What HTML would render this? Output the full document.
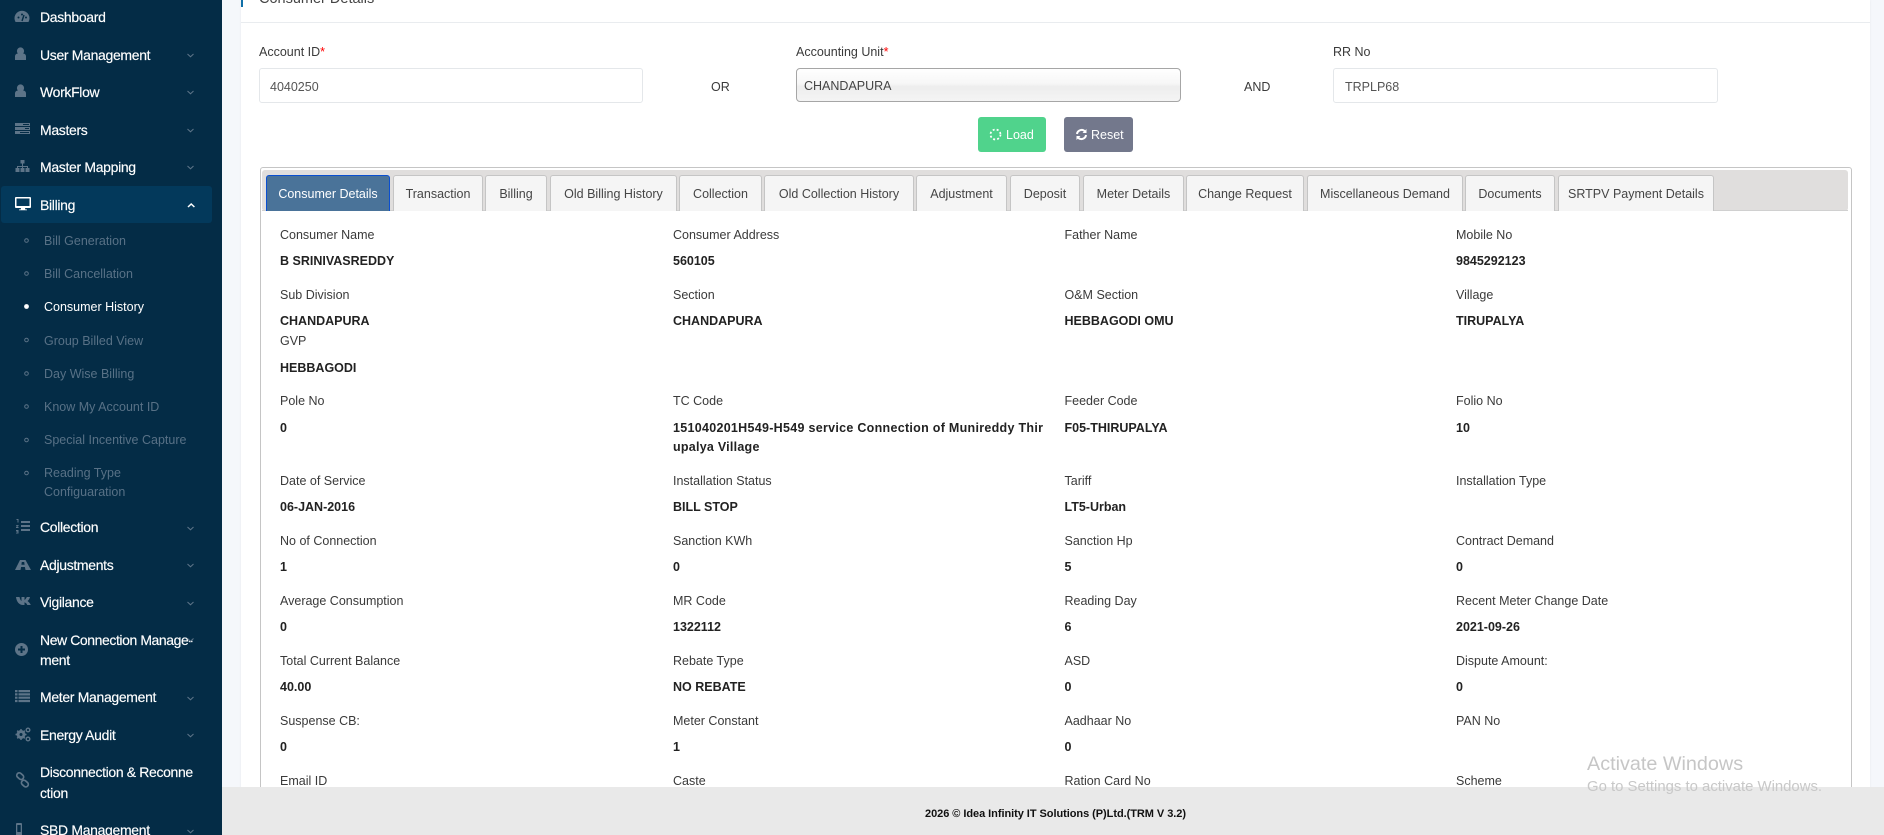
<!DOCTYPE html>
<html><head><meta charset="utf-8"><title>Consumer Details</title>
<style>
html,body{margin:0;padding:0;width:1884px;height:835px;overflow:hidden;background:#f5f7fb;font-family:"Liberation Sans",Arial,sans-serif;color:#333}
.a,.t,.s,.m,.l,.v,.tab{position:absolute;box-sizing:border-box}
.t,.s,.m,.l,.v{white-space:nowrap;line-height:16px}
#side{position:absolute;left:0;top:0;width:222px;height:835px;background:#042c46;overflow:hidden}
.m{left:40px;color:#fff;font-size:14px;letter-spacing:-.33px;-webkit-text-stroke:.15px #fff}
.s{left:44px;color:#587186;font-size:12.5px;margin-top:1px}
.l{font-size:12.5px;color:#3a3a3a}
.v{font-size:12.5px;font-weight:bold;color:#222}
.tab{top:175px;height:36px;background:#f5f5f5;border:1px solid #c5c5c5;border-bottom:0;border-radius:3px 3px 0 0;text-align:center;line-height:36px;font-size:12.5px;color:#454545;white-space:nowrap}
.inp{position:absolute;top:68px;height:35px;background:#fff;border:1px solid #e4e7ea;border-radius:3px;box-sizing:border-box}
</style></head><body>

<div id="side">
<div class="a" style="left:1px;top:186px;width:211px;height:37px;background:#03395b;border-radius:3px"></div>
<div class="m" style="top:9px">Dashboard</div>
<div class="m" style="top:47px">User Management</div>
<div class="m" style="top:84px">WorkFlow</div>
<div class="m" style="top:122px">Masters</div>
<div class="m" style="top:159px">Master Mapping</div>
<div class="m" style="top:197px">Billing</div>
<div class="s" style="top:232px">Bill Generation</div>
<div class="s" style="top:265px">Bill Cancellation</div>
<div class="s" style="top:298px;color:#fff">Consumer History</div>
<div class="s" style="top:332px">Group Billed View</div>
<div class="s" style="top:365px">Day Wise Billing</div>
<div class="s" style="top:398px">Know My Account ID</div>
<div class="s" style="top:431px">Special Incentive Capture</div>
<div class="s" style="top:464px">Reading Type</div>
<div class="s" style="top:483px">Configuaration</div>
<div class="m" style="top:519px">Collection</div>
<div class="m" style="top:557px">Adjustments</div>
<div class="m" style="top:594px">Vigilance</div>
<div class="m" style="top:632px;letter-spacing:-.42px">New Connection Manage-</div>
<div class="m" style="top:652px">ment</div>
<div class="m" style="top:689px">Meter Management</div>
<div class="m" style="top:727px">Energy Audit</div>
<div class="m" style="top:764px;letter-spacing:-.36px">Disconnection &amp; Reconne</div>
<div class="m" style="top:785px">ction</div>
<div class="m" style="top:822px">SBD Management</div>
<svg class="a" style="left:0;top:0" width="222" height="835" viewBox="0 0 222 835">
<g fill="#5d7488">
<!-- gauge -->
<path d="M15.5 22a7.5 7.5 0 1 1 13 0z"/><path d="M22 21l2-6" stroke="#042c46" stroke-width="1.4"/><circle cx="18.5" cy="17.5" r="1" fill="#042c46"/><circle cx="22" cy="14.5" r="1" fill="#042c46"/><circle cx="26" cy="17.5" r="1" fill="#042c46"/>
<!-- user -->
<circle cx="20.5" cy="51" r="3.6"/><path d="M15 60v-3.5c0-2 1.5-3 3-3h5c1.5 0 3 1 3 3V60z"/>
<circle cx="20.5" cy="88" r="3.6"/><path d="M15 97v-3.5c0-2 1.5-3 3-3h5c1.5 0 3 1 3 3V97z"/>
<!-- masters -->
<path d="M15 123h15v3h-15zM15 127h15v3h-15zM15 131h15v3h-15z"/><path d="M23 124h6v1h-6zM25 128h4v1h-4zM20 132h9v1h-9z" fill="#042c46"/>
<!-- sitemap -->
<path d="M20.5 160h4v3.5h-4zM22 163.5h1V166h5v2h-1v-1h-4v1h-1v-1h-4v1h-1v-2h5z"/><path d="M15.5 168h4v4h-4zM20.5 168h4v4h-4zM25.5 168h4v4h-4z"/>
<!-- list-ol -->
<path d="M21 521h9v2h-9zM21 525h9v2h-9zM21 529h9v2h-9zM16.5 519h2v3.5h-1v-2.500h-1zM16 525h2.500v1l-1.500 1h1.500v1H16v-1l1.500-1.200H16zM16 530h2.500v3.500H16v-.8h1.500v-.5H16.500v-.7h1v-.3H16z"/>
<!-- road -->
<path fill-rule="evenodd" d="M20 560h5.500L31 570H25.500l-.6-3h-3.800l-.6 3H15zM21.800 562l-.4 2.700h3.200l-.4-2.700z"/>
<!-- vk -->
<path d="M16 597h3.500c.5 2 1.200 3.500 2 4v-4h3v3c1-.6 1.800-1.800 2.300-3H30c-.5 2-1.500 3.200-2.500 4 1.200.8 2.500 2.200 3.300 4h-3.500c-.6-1.300-1.600-2.200-2.800-2.700V605h-1.500c-4 0-6.500-3.500-7-8z"/>
<!-- plus circle -->
<path fill-rule="evenodd" d="M21.500 643a6.500 6.500 0 1 1 0 13 6.500 6.500 0 0 1 0-13zM20.500 646v2.500H18v2h2.500v2.500h2v-2.500H25v-2h-2.500V646z"/>
<!-- list -->
<path d="M15 690h2.500v2.200H15zM18.500 690H30v2.200H18.500zM15 693.300h2.500v2.200H15zM18.500 693.300H30v2.200H18.500zM15 696.600h2.500v2.200H15zM18.500 696.600H30v2.200H18.500zM15 699.900h2.500v2.200H15zM18.500 699.900H30v2.200H18.500z"/>
<!-- cogs -->
<circle cx="21" cy="734.500" r="3.300" fill="none" stroke="#5d7488" stroke-width="2.400"/><path d="M21 729v11M15.500 734.500h11M17.200 730.700l7.600 7.600M24.800 730.700l-7.600 7.600" stroke="#5d7488" stroke-width="1.500"/><circle cx="21" cy="734.500" r="1.500" fill="#042c46"/>
<circle cx="28" cy="730" r="1.800" fill="none" stroke="#5d7488" stroke-width="1.400"/><circle cx="28" cy="739" r="1.800" fill="none" stroke="#5d7488" stroke-width="1.400"/>
<!-- mobile -->
<path fill-rule="evenodd" d="M17 823h4c.6 0 1 .4 1 1v11h-6v-11c0-.6.4-1 1-1zM17.300 825v7h3.400v-7z"/>
</g>
<!-- chain -->
<g fill="none" stroke="#5d7488" stroke-width="1.700"><rect x="16.500" y="773.500" width="7.500" height="5" rx="2.500" transform="rotate(42 20 776)"/><rect x="21.500" y="781" width="7.500" height="5" rx="2.500" transform="rotate(42 25 783)"/></g>
<!-- monitor -->
<path fill="#fff" fill-rule="evenodd" d="M16 197h14c.6 0 1 .4 1 1v9c0 .6-.4 1-1 1h-5l.4 1.500H27v.8h-8v-.8h1.600L21 208h-5c-.6 0-1-.4-1-1v-9c0-.6.4-1 1-1zM16.500 198.500v7.500h13v-7.500z"/>
<!-- bullets -->
<g fill="none" stroke="#5d7488" stroke-width="1"><circle cx="26.500" cy="240.500" r="1.800"/><circle cx="26.500" cy="273.500" r="1.800"/><circle cx="26.500" cy="340" r="1.800"/><circle cx="26.500" cy="373.500" r="1.800"/><circle cx="26.500" cy="406.500" r="1.800"/><circle cx="26.500" cy="440" r="1.800"/><circle cx="26.500" cy="473" r="1.800"/></g>
<circle cx="26.500" cy="306.500" r="2.400" fill="#fff"/>
<!-- chevrons -->
<g fill="none" stroke="#5d7488" stroke-width="1"><path d="M187.500 54l3 2.800 3-2.800M187.500 91l3 2.800 3-2.800M187.500 129l3 2.800 3-2.800M187.500 166l3 2.800 3-2.800M187.500 527l3 2.800 3-2.800M187.500 564l3 2.800 3-2.800M187.500 602l3 2.800 3-2.800M187.500 638.500l3 2.800 3-2.800M187.500 697l3 2.800 3-2.800M187.500 734l3 2.800 3-2.800M187.500 830l3 2.800 3-2.800"/></g>
<path d="M188 207l3.200-3 3.200 3" fill="none" stroke="#fff" stroke-width="1.500"/>
</svg>
</div>

<!-- card -->
<div class="a" style="left:241px;top:0;width:1629px;height:790px;background:#fff;box-shadow:0 0 2px rgba(0,0,0,.06)"></div>
<div class="a" style="left:241px;top:0;width:2px;height:7px;background:#1070a8"></div>
<div class="t" style="left:259px;top:-9px;font-size:14.500px;color:#444">Consumer Details</div>
<div class="a" style="left:241px;top:22px;width:1629px;height:1px;background:#e9ecef"></div>

<div class="l" style="left:259px;top:44px">Account ID<span style="color:#f00">*</span></div>
<div class="l" style="left:796px;top:44px">Accounting Unit<span style="color:#f00">*</span></div>
<div class="l" style="left:1333px;top:44px">RR No</div>
<div class="inp" style="left:259px;width:384px"></div>
<div class="l" style="left:270px;top:79px;color:#555">4040250</div>
<div class="l" style="left:711px;top:79px">OR</div>
<div class="a" style="left:796px;top:68px;width:385px;height:34px;border:1px solid #a6a6a6;border-radius:4px;background:linear-gradient(#fff 0,#f7f7f7 45%,#ededed 55%,#f4f4f4 100%)"></div>
<div class="l" style="left:804px;top:78px;color:#444">CHANDAPURA</div>
<div class="l" style="left:1244px;top:79px">AND</div>
<div class="inp" style="left:1333px;width:385px"></div>
<div class="l" style="left:1345px;top:79px;color:#555">TRPLP68</div>

<div class="a" style="left:978px;top:117px;width:68px;height:35px;background:#50d38c;border-radius:3px"></div>
<svg class="a" style="left:989px;top:128px" width="13" height="13" viewBox="0 0 13 13"><circle cx="6.500" cy="6.500" r="5" fill="none" stroke="#fff" stroke-width="1.700" stroke-dasharray="2 2.100"/></svg>
<div class="t" style="left:1006px;top:127px;font-size:12.500px;color:#fff">Load</div>
<div class="a" style="left:1064px;top:117px;width:69px;height:35px;background:#73788c;border-radius:3px"></div>
<svg class="a" style="left:1075px;top:128px" width="13" height="13" viewBox="0 0 13 13"><path d="M2 6a4.600 4.600 0 0 1 8-2.500M11 7a4.600 4.600 0 0 1-8 2.500" fill="none" stroke="#fff" stroke-width="2"/><path d="M11.500 1v4h-4zM1.500 12V8h4z" fill="#fff"/></svg>
<div class="t" style="left:1091px;top:127px;font-size:12.500px;color:#fff">Reset</div>

<!-- tabs panel -->
<div class="a" style="left:260px;top:167px;width:1592px;height:640px;border:1px solid #c5c5c5;border-radius:3px;background:#fff"></div>
<div class="a" style="left:262px;top:170px;width:1586px;height:41px;background:#e0dedd;border-radius:3px"></div>
<div class="a" style="left:262px;top:210px;width:1586px;height:1px;background:#d0d0d0"></div>
<div class="tab" style="left:266px;width:124px;background:#4a7399;border-color:#0a4fd0;color:#fff">Consumer Details</div>
<div class="tab" style="left:393px;width:90px">Transaction</div>
<div class="tab" style="left:485px;width:62px">Billing</div>
<div class="tab" style="left:550px;width:127px">Old Billing History</div>
<div class="tab" style="left:679px;width:83px">Collection</div>
<div class="tab" style="left:764px;width:150px">Old Collection History</div>
<div class="tab" style="left:916px;width:91px">Adjustment</div>
<div class="tab" style="left:1010px;width:70px">Deposit</div>
<div class="tab" style="left:1083px;width:101px">Meter Details</div>
<div class="tab" style="left:1186px;width:118px">Change Request</div>
<div class="tab" style="left:1307px;width:156px">Miscellaneous Demand</div>
<div class="tab" style="left:1465px;width:90px">Documents</div>
<div class="tab" style="left:1558px;width:156px">SRTPV Payment Details</div>

<!-- details -->
<div class="l" style="left:280px;top:227px">Consumer Name</div><div class="v" style="left:280px;top:253px">B SRINIVASREDDY</div>
<div class="l" style="left:673px;top:227px">Consumer Address</div><div class="v" style="left:673px;top:253px">560105</div>
<div class="l" style="left:1064.500px;top:227px">Father Name</div>
<div class="l" style="left:1456px;top:227px">Mobile No</div><div class="v" style="left:1456px;top:253px">9845292123</div>

<div class="l" style="left:280px;top:287px">Sub Division</div><div class="v" style="left:280px;top:313px">CHANDAPURA</div>
<div class="l" style="left:673px;top:287px">Section</div><div class="v" style="left:673px;top:313px">CHANDAPURA</div>
<div class="l" style="left:1064.500px;top:287px">O&amp;M Section</div><div class="v" style="left:1064.500px;top:313px">HEBBAGODI OMU</div>
<div class="l" style="left:1456px;top:287px">Village</div><div class="v" style="left:1456px;top:313px">TIRUPALYA</div>

<div class="l" style="left:280px;top:333px">GVP</div><div class="v" style="left:280px;top:360px">HEBBAGODI</div>

<div class="l" style="left:280px;top:393px">Pole No</div><div class="v" style="left:280px;top:420px">0</div>
<div class="l" style="left:673px;top:393px">TC Code</div><div class="v" style="left:673px;top:420px;letter-spacing:.29px">151040201H549-H549 service Connection of Munireddy Thir</div><div class="v" style="left:673px;top:439px;letter-spacing:.25px">upalya Village</div>
<div class="l" style="left:1064.500px;top:393px">Feeder Code</div><div class="v" style="left:1064.500px;top:420px">F05-THIRUPALYA</div>
<div class="l" style="left:1456px;top:393px">Folio No</div><div class="v" style="left:1456px;top:420px">10</div>

<div class="l" style="left:280px;top:473px">Date of Service</div><div class="v" style="left:280px;top:499px">06-JAN-2016</div>
<div class="l" style="left:673px;top:473px">Installation Status</div><div class="v" style="left:673px;top:499px">BILL STOP</div>
<div class="l" style="left:1064.500px;top:473px">Tariff</div><div class="v" style="left:1064.500px;top:499px">LT5-Urban</div>
<div class="l" style="left:1456px;top:473px">Installation Type</div>

<div class="l" style="left:280px;top:533px">No of Connection</div><div class="v" style="left:280px;top:559px">1</div>
<div class="l" style="left:673px;top:533px">Sanction KWh</div><div class="v" style="left:673px;top:559px">0</div>
<div class="l" style="left:1064.500px;top:533px">Sanction Hp</div><div class="v" style="left:1064.500px;top:559px">5</div>
<div class="l" style="left:1456px;top:533px">Contract Demand</div><div class="v" style="left:1456px;top:559px">0</div>

<div class="l" style="left:280px;top:593px">Average Consumption</div><div class="v" style="left:280px;top:619px">0</div>
<div class="l" style="left:673px;top:593px">MR Code</div><div class="v" style="left:673px;top:619px">1322112</div>
<div class="l" style="left:1064.500px;top:593px">Reading Day</div><div class="v" style="left:1064.500px;top:619px">6</div>
<div class="l" style="left:1456px;top:593px">Recent Meter Change Date</div><div class="v" style="left:1456px;top:619px">2021-09-26</div>

<div class="l" style="left:280px;top:653px">Total Current Balance</div><div class="v" style="left:280px;top:679px">40.00</div>
<div class="l" style="left:673px;top:653px">Rebate Type</div><div class="v" style="left:673px;top:679px">NO REBATE</div>
<div class="l" style="left:1064.500px;top:653px">ASD</div><div class="v" style="left:1064.500px;top:679px">0</div>
<div class="l" style="left:1456px;top:653px">Dispute Amount:</div><div class="v" style="left:1456px;top:679px">0</div>

<div class="l" style="left:280px;top:713px">Suspense CB:</div><div class="v" style="left:280px;top:739px">0</div>
<div class="l" style="left:673px;top:713px">Meter Constant</div><div class="v" style="left:673px;top:739px">1</div>
<div class="l" style="left:1064.500px;top:713px">Aadhaar No</div><div class="v" style="left:1064.500px;top:739px">0</div>
<div class="l" style="left:1456px;top:713px">PAN No</div>

<div class="l" style="left:280px;top:773px">Email ID</div>
<div class="l" style="left:673px;top:773px">Caste</div>
<div class="l" style="left:1064.500px;top:773px">Ration Card No</div>
<div class="l" style="left:1456px;top:773px">Scheme</div>

<!-- footer -->
<div class="a" style="left:222px;top:787px;width:1662px;height:48px;background:#e9e9e9"></div>
<div class="t" style="left:925px;top:806px;font-size:11px;font-weight:bold;color:#111;letter-spacing:-.05px">2026 © Idea Infinity IT Solutions (P)Ltd.(TRM V 3.2)</div>

<!-- watermark -->
<div class="t" style="left:1587px;top:752px;font-size:19.800px;line-height:24px;color:#c6c6c6">Activate Windows</div>
<div class="t" style="left:1587px;top:779px;font-size:14.900px;color:#c8c8c8">Go to Settings to activate Windows.</div>
</body></html>
